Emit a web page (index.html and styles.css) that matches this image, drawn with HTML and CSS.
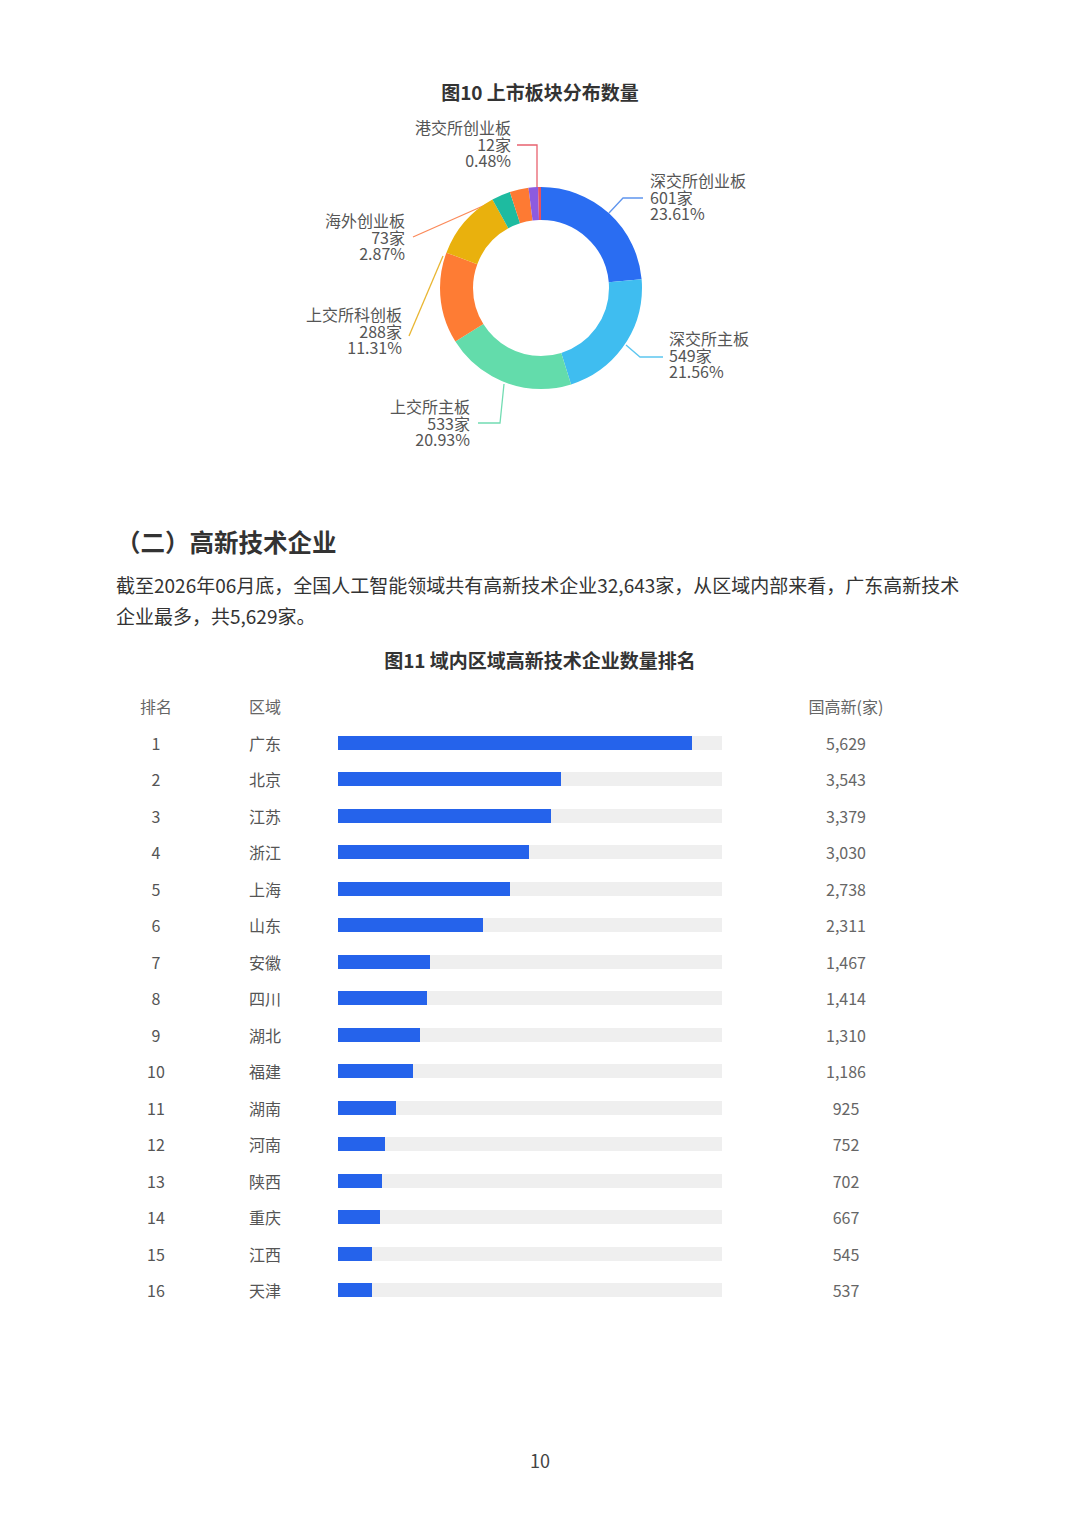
FILE: index.html
```html
<!DOCTYPE html>
<html lang="zh-CN">
<head>
<meta charset="utf-8">
<title>高新技术企业</title>
<link rel="stylesheet" href="styles.css">
</head>
<body>
<div class="page">
  <h3 class="fig-title fig-title-10">图10 上市板块分布数量</h3>
  <svg class="donut-chart" width="480" height="350" viewBox="300 110 480 350" xmlns="http://www.w3.org/2000/svg">
    <g class="leaders" fill="none" stroke-width="1.3">
      <polyline points="517,145 537,145 537,190" stroke="#e8626f"/>
      <polyline points="609,213 623,198 643,198" stroke="#5f95ee"/>
      <polyline points="626,345 640,357 663,357" stroke="#5cc6f0"/>
      <polyline points="504,384 500,423 478,423" stroke="#72dcb2"/>
      <polyline points="409,336 443,256" stroke="#e9b633"/>
      <polyline points="413,237 492,202" stroke="#fb8a5a"/>
    </g>
    <g class="ring" fill="none" stroke-width="33" transform="rotate(-90 541 288)">
      <circle cx="541" cy="288" r="84.5" pathLength="100" stroke="#2a6df2" stroke-dasharray="23.61 100" stroke-dashoffset="0"/>
      <circle cx="541" cy="288" r="84.5" pathLength="100" stroke="#3fbdf0" stroke-dasharray="21.56 100" stroke-dashoffset="-23.61"/>
      <circle cx="541" cy="288" r="84.5" pathLength="100" stroke="#63dcab" stroke-dasharray="20.93 100" stroke-dashoffset="-45.17"/>
      <circle cx="541" cy="288" r="84.5" pathLength="100" stroke="#fe7c34" stroke-dasharray="14.6 100" stroke-dashoffset="-66.10"/>
      <circle cx="541" cy="288" r="84.5" pathLength="100" stroke="#e9b10d" stroke-dasharray="11.31 100" stroke-dashoffset="-80.70"/>
      <circle cx="541" cy="288" r="84.5" pathLength="100" stroke="#1ebba0" stroke-dasharray="2.99 100" stroke-dashoffset="-92.01"/>
      <circle cx="541" cy="288" r="84.5" pathLength="100" stroke="#fe7a33" stroke-dasharray="3.0 100" stroke-dashoffset="-95.0"/>
      <circle cx="541" cy="288" r="84.5" pathLength="100" stroke="#8c5be0" stroke-dasharray="1.52 100" stroke-dashoffset="-98.0"/>
      <circle cx="541" cy="288" r="84.5" pathLength="100" stroke="#e8505f" stroke-dasharray="0.48 100" stroke-dashoffset="-99.52"/>
    </g>
    <g class="labels">
      <text class="lbl end" x="511" y="127">港交所创业板</text>
      <text class="lbl end" x="511" y="143.5">12家</text>
      <text class="lbl end" x="511" y="160">0.48%</text>

      <text class="lbl" x="650" y="180">深交所创业板</text>
      <text class="lbl" x="650" y="196.5">601家</text>
      <text class="lbl" x="650" y="213">23.61%</text>

      <text class="lbl" x="669" y="338">深交所主板</text>
      <text class="lbl" x="669" y="354.5">549家</text>
      <text class="lbl" x="669" y="371">21.56%</text>

      <text class="lbl end" x="470" y="406">上交所主板</text>
      <text class="lbl end" x="470" y="422.5">533家</text>
      <text class="lbl end" x="470" y="439">20.93%</text>

      <text class="lbl end" x="402" y="314">上交所科创板</text>
      <text class="lbl end" x="402" y="330.5">288家</text>
      <text class="lbl end" x="402" y="347">11.31%</text>

      <text class="lbl end" x="405" y="220">海外创业板</text>
      <text class="lbl end" x="405" y="236.5">73家</text>
      <text class="lbl end" x="405" y="253">2.87%</text>
    </g>
  </svg>

  <h2 class="section-title">（二）高新技术企业</h2>
  <p class="body-text">截至2026年06月底，全国人工智能领域共有高新技术企业32,643家，从区域内部来看，广东高新技术企业最多，共5,629家。</p>

  <h3 class="fig-title fig-title-11">图11 域内区域高新技术企业数量排名</h3>
  <div class="rank-table">
    <div class="rank-row rank-head">
      <span class="c-rank">排名</span>
      <span class="c-region">区域</span>
      <span class="c-bar"></span>
      <span class="c-value">国高新(家)</span>
    </div>
    <div class="rank-row"><span class="c-rank">1</span><span class="c-region">广东</span><span class="c-bar"><i class="fill" style="width:92.28%"></i></span><span class="c-value">5,629</span></div>
    <div class="rank-row"><span class="c-rank">2</span><span class="c-region">北京</span><span class="c-bar"><i class="fill" style="width:58.08%"></i></span><span class="c-value">3,543</span></div>
    <div class="rank-row"><span class="c-rank">3</span><span class="c-region">江苏</span><span class="c-bar"><i class="fill" style="width:55.39%"></i></span><span class="c-value">3,379</span></div>
    <div class="rank-row"><span class="c-rank">4</span><span class="c-region">浙江</span><span class="c-bar"><i class="fill" style="width:49.67%"></i></span><span class="c-value">3,030</span></div>
    <div class="rank-row"><span class="c-rank">5</span><span class="c-region">上海</span><span class="c-bar"><i class="fill" style="width:44.89%"></i></span><span class="c-value">2,738</span></div>
    <div class="rank-row"><span class="c-rank">6</span><span class="c-region">山东</span><span class="c-bar"><i class="fill" style="width:37.89%"></i></span><span class="c-value">2,311</span></div>
    <div class="rank-row"><span class="c-rank">7</span><span class="c-region">安徽</span><span class="c-bar"><i class="fill" style="width:24.05%"></i></span><span class="c-value">1,467</span></div>
    <div class="rank-row"><span class="c-rank">8</span><span class="c-region">四川</span><span class="c-bar"><i class="fill" style="width:23.18%"></i></span><span class="c-value">1,414</span></div>
    <div class="rank-row"><span class="c-rank">9</span><span class="c-region">湖北</span><span class="c-bar"><i class="fill" style="width:21.48%"></i></span><span class="c-value">1,310</span></div>
    <div class="rank-row"><span class="c-rank">10</span><span class="c-region">福建</span><span class="c-bar"><i class="fill" style="width:19.44%"></i></span><span class="c-value">1,186</span></div>
    <div class="rank-row"><span class="c-rank">11</span><span class="c-region">湖南</span><span class="c-bar"><i class="fill" style="width:15.16%"></i></span><span class="c-value">925</span></div>
    <div class="rank-row"><span class="c-rank">12</span><span class="c-region">河南</span><span class="c-bar"><i class="fill" style="width:12.33%"></i></span><span class="c-value">752</span></div>
    <div class="rank-row"><span class="c-rank">13</span><span class="c-region">陕西</span><span class="c-bar"><i class="fill" style="width:11.51%"></i></span><span class="c-value">702</span></div>
    <div class="rank-row"><span class="c-rank">14</span><span class="c-region">重庆</span><span class="c-bar"><i class="fill" style="width:10.93%"></i></span><span class="c-value">667</span></div>
    <div class="rank-row"><span class="c-rank">15</span><span class="c-region">江西</span><span class="c-bar"><i class="fill" style="width:8.93%"></i></span><span class="c-value">545</span></div>
    <div class="rank-row"><span class="c-rank">16</span><span class="c-region">天津</span><span class="c-bar"><i class="fill" style="width:8.80%"></i></span><span class="c-value">537</span></div>
  </div>

  <div class="page-number">10</div>
</div>
</body>
</html>
```

FILE: styles.css
```css
* {
  box-sizing: border-box;
}

html, body {
  margin: 0;
  padding: 0;
  background: #ffffff;
}

body {
  font-family: "Noto Sans CJK SC", "Noto Sans", "Liberation Sans", sans-serif;
  color: #333333;
}

.page {
  width: 1080px;
  min-height: 1527px;
  display: flex;
  flex-direction: column;
  overflow: hidden;
}

.fig-title {
  margin: 0;
  text-align: center;
  font-weight: 700;
  color: #333333;
}

.fig-title-10 {
  margin-top: 80px;
  font-size: 19px;
  line-height: 24px;
}

.donut-chart {
  display: block;
  margin: 6px auto 0;
}

.lbl {
  font-family: "Noto Sans CJK SC", "Noto Sans", sans-serif;
  font-size: 16px;
  fill: #555555;
  dominant-baseline: central;
}

.lbl.end {
  text-anchor: end;
}

.section-title {
  margin: 65px 0 0 0;
  padding-left: 116px;
  font-size: 24.5px;
  line-height: 34px;
  font-weight: 700;
  color: #333333;
}

.body-text {
  margin: 10px 0 0 0;
  padding: 0 110px 0 116px;
  font-size: 19px;
  line-height: 31px;
  color: #333333;
}

.fig-title-11 {
  margin-top: 17px;
  font-size: 19px;
  line-height: 24px;
}

.rank-table {
  margin-top: 16px;
  display: flex;
  flex-direction: column;
}

.rank-row {
  display: grid;
  grid-template-columns: 72px 146px 384px 248px;
  align-items: center;
  height: 36.5px;
  padding-left: 120px;
  font-size: 16px;
  color: #555555;
}

.c-rank {
  text-align: center;
}

.c-region {
  padding-left: 57px;
}

.c-value {
  text-align: center;
  color: #666666;
}

.c-bar {
  display: block;
  height: 14px;
  background: #efefef;
}

.rank-head .c-bar {
  background: transparent;
}

.rank-head span {
  color: #666666;
}

.fill {
  display: block;
  height: 100%;
  background: #2563eb;
}

.page-number {
  margin-top: 139px;
  text-align: center;
  font-size: 18px;
  line-height: 24px;
  color: #444444;
}
```
